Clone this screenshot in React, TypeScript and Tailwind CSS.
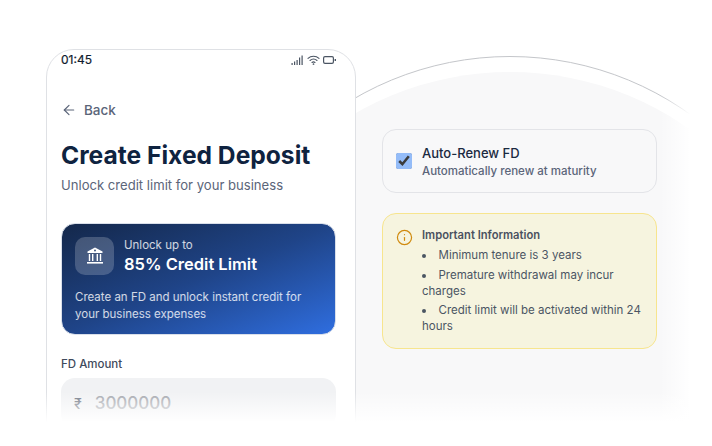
import { ArrowLeft, Info } from "lucide-react";

function StatusIcons() {
  return (
    <div className="flex items-center gap-[3px] text-[#4b5563]">
      <svg width="13" height="10" viewBox="0 0 13 10" fill="currentColor">
        <rect x="0.5" y="8" width="1.2" height="2" />
        <rect x="3" y="6.5" width="1.2" height="3.5" />
        <rect x="5.5" y="5" width="1.2" height="5" />
        <rect x="8" y="2.5" width="1.2" height="7.5" />
        <rect x="10.5" y="0.5" width="1.2" height="9.5" />
      </svg>
      <svg width="13" height="10" viewBox="0 0 13 10" fill="none" stroke="currentColor" strokeWidth="1.1" strokeLinecap="round">
        <path d="M1 3.4C4 .6 9 .6 12 3.4" />
        <path d="M3 5.5c2-1.7 5-1.7 7 0" />
        <path d="M5 7.5c.9-.7 2.1-.7 3 0" />
        <circle cx="6.5" cy="9.2" r="0.3" />
      </svg>
      <svg width="14" height="8" viewBox="0 0 14 8" fill="none" stroke="currentColor">
        <rect x="0.6" y="0.6" width="9.8" height="6.8" rx="1.4" strokeWidth="1.2" />
        <path d="M11.6 3v2h1.4V3z" fill="currentColor" strokeWidth="0" />
      </svg>
    </div>
  );
}

function BankIcon() {
  return (
    <svg width="18" height="18" viewBox="0 0 18 18" fill="white">
      <path d="M9 0.5 16.5 4.4V6H1.5V4.4L9 0.5Zm0 2a1 1 0 1 0 0 2 1 1 0 0 0 0-2Z" fillRule="evenodd" />
      <rect x="2.8" y="7" width="1.4" height="7" />
      <rect x="6" y="7" width="1.4" height="7" />
      <rect x="10.6" y="7" width="1.4" height="7" />
      <rect x="13.8" y="7" width="1.4" height="7" />
      <rect x="1" y="15" width="16" height="1.6" />
    </svg>
  );
}

export default function App() {
  return (
    <div className="relative w-[712px] h-[446px] overflow-hidden bg-white flex items-start pl-[46px] pt-[49px] font-['Inter',sans-serif]">
      {/* background arcs behind the right column */}
      <div className="absolute left-[200px] top-[56px] w-[620px] h-[620px] rounded-full border border-[#c4c6ca]" />
      <div className="absolute left-[200px] top-[72px] w-[620px] h-[620px] rounded-full bg-[#f8f8f9]" />
      <div className="absolute left-[660px] top-0 w-[30px] h-[446px] bg-gradient-to-r from-transparent to-white" />
      <div className="absolute left-[690px] top-0 w-[22px] h-[446px] bg-white" />

      <div className="relative z-10 w-[310px] h-[400px] shrink-0 rounded-t-[28px] border border-[#dfe1e5] bg-white px-[14px]">
        <div className="flex items-center justify-between h-[19px] text-[12px] font-normal text-[#111c2e]">
          <span className="[-webkit-text-stroke:0.2px_#111c2e]">01:45</span>
          <div className="mr-[4px]"><StatusIcons /></div>
        </div>

        <div className="flex items-center gap-[7px] mt-[31px] text-[13.5px] font-medium text-[#5b6579]">
          <ArrowLeft size={16} strokeWidth={1.8} />
          <span>Back</span>
        </div>

        <h1 className="mt-[19px] text-[24.6px] leading-[32px] font-bold text-[#0f2340]">Create Fixed Deposit</h1>
        <p className="mt-[4px] text-[13.1px] leading-[20px] text-[#5b6579]">Unlock credit limit for your business</p>

        <div className="mt-[28px] w-[275px] h-[112px] rounded-[14px] border border-[#d9dfea] bg-gradient-to-br from-[#14284b] via-[#1f4488] to-[#2f6ee0] px-[13px] pt-[13px]">
          <div className="flex items-center gap-[10px]">
            <div className="flex items-center justify-center w-[39px] h-[38px] rounded-[10px] bg-white/20">
              <BankIcon />
            </div>
            <div>
              <div className="text-[11.5px] leading-[14px] text-white/80">Unlock up to</div>
              <div className="mt-[2px] text-[16.5px] leading-[20px] font-semibold text-white">85% Credit Limit</div>
            </div>
          </div>
          <p className="mt-[14px] text-[11.5px] leading-[17px] text-white/80">
            Create an FD and unlock instant credit for your business expenses
          </p>
        </div>

        <div className="mt-[21px] text-[11.5px] leading-[16px] font-medium text-[#3f4a5c]">FD Amount</div>
        <div className="mt-[6px] flex items-center gap-[13px] w-[275px] h-[50px] rounded-[14px] bg-[#f1f2f4] px-[13px]">
          <span className="text-[14px] font-medium text-[#6b7280]">₹</span>
          <span className="text-[17px] font-medium text-[#a3a6ad]">3000000</span>
        </div>
      </div>

      <div className="relative z-10 ml-[26px] w-[275px] mt-[80px] flex flex-col gap-[20px]">
        <div className="flex items-center gap-[10px] h-[64px] rounded-[14px] border border-[#e3e4e8] bg-[#f8f8f9] px-[13px]">
          <input type="checkbox" defaultChecked className="w-[16px] h-[16px] accent-[#94bcf8]" />
          <div>
            <div className="text-[13px] leading-[18px] font-medium text-[#1b2a41]">Auto-Renew FD</div>
            <div className="mt-[2px] text-[11.5px] leading-[15px] font-medium text-[#5b6579]">Automatically renew at maturity</div>
          </div>
        </div>

        <div className="flex gap-[9px] h-[136px] rounded-[14px] border border-[#f7e58e] bg-[#f6f4df] pl-[13px] pr-[12px] pt-[13px]">
          <Info size={17} strokeWidth={1.7} className="shrink-0 mt-[2px] text-[#d08a0e]" />
          <div className="text-[#4b5563]">
            <div className="text-[11.2px] leading-[16px] font-semibold text-[#4a5160]">Important Information</div>
            <ul className="list-disc list-inside mt-[4px] text-[11.5px] leading-[16px] flex flex-col gap-[3.5px]">
              <li>Minimum tenure is 3 years</li>
              <li>Premature withdrawal may incur charges</li>
              <li>Credit limit will be activated within 24 hours</li>
            </ul>
          </div>
        </div>
      </div>

      {/* fade out at the bottom */}
      <div className="absolute z-20 left-0 top-[392px] w-full h-[30px] bg-gradient-to-b from-transparent to-white" />
      <div className="absolute z-20 left-0 top-[422px] w-full h-[24px] bg-white" />
    </div>
  );
}
